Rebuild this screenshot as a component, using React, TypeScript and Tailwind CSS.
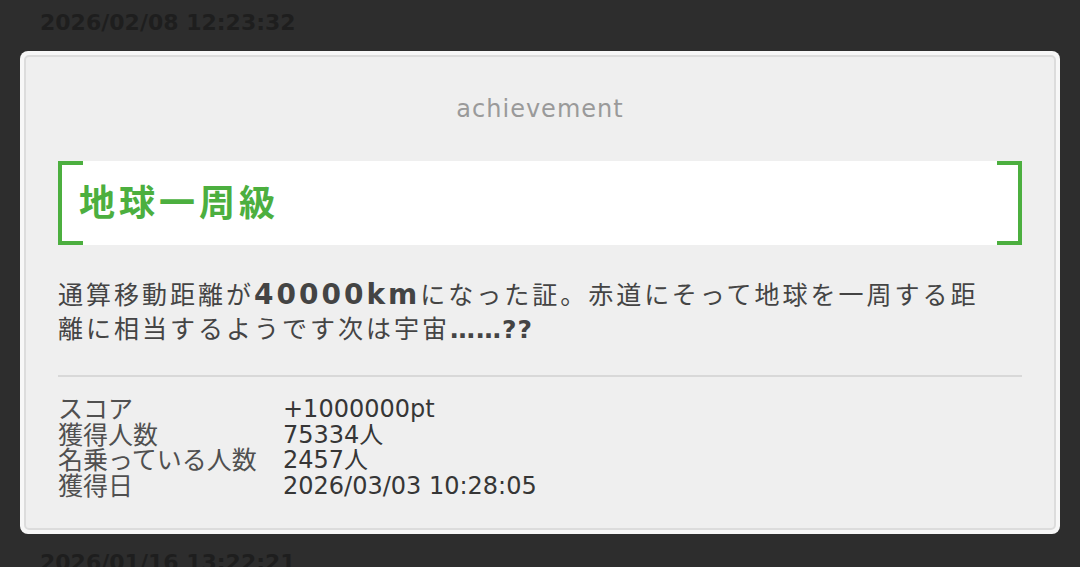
import React from 'react';

const jp = { fontFamily: '"DejaVu Sans", "Noto Sans CJK JP", sans-serif' };

const stats: [string, string][] = [
  ['スコア', '+1000000pt'],
  ['獲得人数', '75334人'],
  ['名乗っている人数', '2457人'],
  ['獲得日', '2026/03/03 10:28:05'],
];

const App: React.FC = () => {
  return (
    <div className="w-[1080px] h-[567px] bg-[#2d2d2d] overflow-hidden flex flex-col" style={jp}>
      <div className="shrink-0 h-[51px] pl-[40px] pt-[8px] text-[22px] font-bold text-[#1e1e1e] leading-[30px]">
        2026/02/08 12:23:32
      </div>
      <div className="shrink-0 mx-[20px] bg-[#f7f7f7] rounded-[8px] p-[4px]">
        <div className="bg-[#efefef] border-2 border-[#dcdcdc] rounded-[5px] h-[475px] px-[32px] flex flex-col">
          <div className="pt-[36px] text-center text-[24px] text-[#9a9a9a] leading-[32px] tracking-[1px]">achievement</div>

          <div className="mt-[36px] relative h-[84px] bg-white flex items-center pl-[21px]">
            <div className="absolute left-0 top-0 w-[25px] h-full border-l-4 border-t-4 border-b-4 border-[#4caf3f]" />
            <div className="absolute right-0 top-0 w-[25px] h-full border-r-4 border-t-4 border-b-4 border-[#4caf3f]" />
            <span className="text-[36px] font-bold text-[#4caf3f] leading-none tracking-[4px] pt-[2px]">地球一周級</span>
          </div>

          <div className="mt-[33px] text-[25px] leading-[34px] text-[#444] tracking-[3px] whitespace-nowrap">
            通算移動距離が<span className="font-bold text-[28px] tracking-[3px]">40000km</span>になった証。赤道にそって地球を一周する距
            <br />
            離に相当するようです次は宇宙<span className="font-bold tracking-[1px]">……??</span>
          </div>

          <div className="mt-[28px] border-t-2 border-[#d8d8d8]" />

          <div className="mt-[20px] flex flex-col text-[24px] leading-[25.7px]">
            {stats.map(([label, value]) => (
              <div key={label} className="flex">
                <div className="w-[225px] text-[25px] text-[#505050]">{label}</div>
                <div className="text-[#363636]">{value}</div>
              </div>
            ))}
          </div>
        </div>
      </div>
      <div className="shrink-0 pl-[40px] pt-[14px] text-[22px] font-bold text-[#1e1e1e] leading-[30px]">
        2026/01/16 13:22:21
      </div>
    </div>
  );
};

export default App;
